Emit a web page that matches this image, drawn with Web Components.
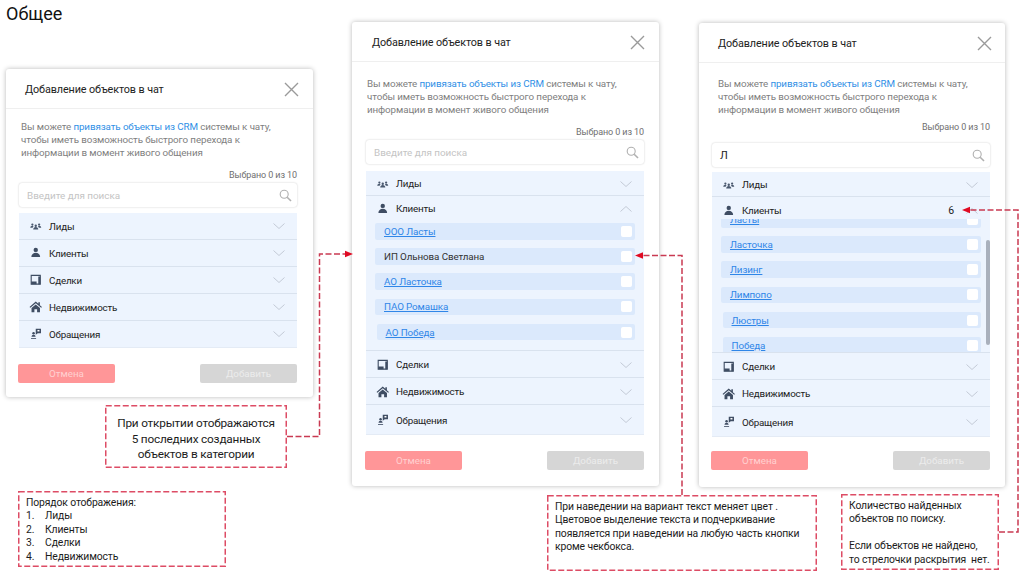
<!DOCTYPE html>
<html lang="ru">
<head>
<meta charset="utf-8">
<title>Добавление объектов в чат</title>
<style>
  html, body { margin: 0; background: #fff; }
  slide-canvas { width: 1024px; height: 574px; }
  #d1 { left: 6px; top: 69px; width: 307px; height: 328px; --row-pt: 0px; --intro-top: 11px; --count-top: 10px; --search-top: 1px; --acc-top: 6px; --btn-top: 16px; --body-left: 13px; --body-right: 16px; --intro-off: 2px; --head-left: 19px; --head-right: 14px; }
  #d2 { left: 352px; top: 22px; width: 307px; height: 464px; --intro-top: 15px; --count-top: 10px; --search-top: 1px; --acc-top: 7px; --btn-top: 16px; --body-left: 14px; --body-right: 15px; --intro-off: 1px; --head-left: 20px; --head-right: 14px; }
  #d3 { left: 699px; top: 23px; width: 306px; height: 464px; --intro-top: 14px; --count-top: 5px; --search-top: 9px; --acc-top: 5px; --btn-top: 14px; --body-left: 13px; --body-right: 15px; --intro-off: 6px; --head-left: 19px; --head-right: 13px; }
  #c1 { left: 105px; top: 405px; width: 182px; height: 63px; --fs: 11.800px; --ls: -.2px; --lh: 15.500px; --pad: 11px 4px; text-align: center; }
  #c2 { left: 18px; top: 491px; width: 208px; height: 76px; --pad: 5px 8px; }
  #c3 { left: 547px; top: 495px; width: 270px; height: 76px; --pad: 5px 8px; }
  #c4 { left: 841px; top: 494px; width: 158px; height: 76px; --pad: 5px 8px; }
  .num { display: inline-block; width: 19px; }
</style>
</head>
<body>
<slide-canvas heading="Общее">
  <attach-dialog id="d1">
    <acc-row icon="leads">Лиды</acc-row>
    <acc-row icon="client">Клиенты</acc-row>
    <acc-row icon="deal">Сделки</acc-row>
    <acc-row icon="house">Недвижимость</acc-row>
    <acc-row icon="request" last>Обращения</acc-row>
  </attach-dialog>

  <attach-dialog id="d2">
    <acc-row icon="leads" style="--row-h:25px">Лиды</acc-row>
    <acc-row icon="client" open style="--row-h:24px">Клиенты</acc-row>
    <item-list style="--list-h:131px;--list-top:3px">
      <list-item link>ООО Ласты</list-item>
      <list-item>ИП Ольнова Светлана</list-item>
      <list-item link>АО Ласточка</list-item>
      <list-item link>ПАО Ромашка</list-item>
      <list-item link style="--item-left:1.500px">АО Победа</list-item>
    </item-list>
    <acc-row icon="deal">Сделки</acc-row>
    <acc-row icon="house">Недвижимость</acc-row>
    <acc-row icon="request" last style="--row-h:30px">Обращения</acc-row>
  </attach-dialog>

  <attach-dialog id="d3" query="Л">
    <acc-row icon="leads" style="--row-h:25px">Лиды</acc-row>
    <acc-row icon="client" open count="6" style="--row-h:22px;--row-pt:5px">Клиенты</acc-row>
    <item-list scrollbar style="--list-h:134px;--list-top:-8px">
      <list-item link>Ласты</list-item>
      <list-item link>Ласточка</list-item>
      <list-item link>Лизинг</list-item>
      <list-item link>Лимпопо</list-item>
      <list-item link style="--item-left:1.500px">Люстры</list-item>
      <list-item link style="--item-left:1.500px">Победа</list-item>
    </item-list>
    <acc-row icon="deal">Сделки</acc-row>
    <acc-row icon="house">Недвижимость</acc-row>
    <acc-row icon="request" last style="--row-h:30px">Обращения</acc-row>
  </attach-dialog>

  <note-box id="c1">При открытии отображаются<br>5 последних созданных<br>объектов в категории</note-box>
  <note-box id="c2">Порядок отображения:<br><span class="num">1.</span>Лиды<br><span class="num">2.</span>Клиенты<br><span class="num">3.</span>Сделки<br><span class="num">4.</span>Недвижимость</note-box>
  <note-box id="c3">При наведении на вариант текст меняет цвет .<br>Цветовое выделение текста и подчеркивание<br>появляется при наведении на любую часть кнопки<br>кроме чекбокса.</note-box>
  <note-box id="c4">Количество найденных<br>объектов по поиску.<br><br>Если объектов не найдено,<br>то стрелочки раскрытия&nbsp; нет.</note-box>

  <note-arrows></note-arrows>
</slide-canvas>

<script>
const FONT = 'Roboto, "Open Sans", sans-serif';

const ICONS = {
  leads: `<g fill="#4a586e"><circle cx="4" cy="6.600" r="1.300"/><circle cx="12" cy="6.600" r="1.300"/><circle cx="8" cy="8" r="1.400"/><path d="M1.500 10.400c0-1.400 1-2.300 2.500-2.300.6 0 1 .1 1.400.4-.6.5-1 1.100-1 1.900z"/><path d="M14.500 10.400c0-1.400-1-2.300-2.500-2.300-.6 0-1 .1-1.400.4.6.5 1 1.100 1 1.900z"/><path d="M5 12.500c0-1.800 1.200-3 3-3s3 1.200 3 3z"/></g>`,
  client: `<g fill="#3f4d63"><circle cx="8" cy="4.600" r="2.600"/><path d="M2.800 13c0-3 2.200-5 5.200-5s5.200 2 5.200 5z"/></g>`,
  deal: `<path fill="none" stroke="#3f4d63" stroke-width="1.300" d="M2.600 2.800h10.800v10.400H2.600z"/><path d="M2.600 10.200h6.400v3H2.600zM11 4v9.200h2.400V4z" fill="#3f4d63"/>`,
  house: `<path fill="#3f4d63" d="M8 1.800 .6 8.400l1 .9L8 3.800l6.400 5.500 1-.9-2.500-2.200V2.600h-1.800v1.700zM3 9.600v4.800h3.400v-3.300h3.200v3.300H13V9.600L8 5.300z"/>`,
  request: `<g fill="#3f4d63"><path d="M8 2h6.200v5.400H10.400L8 9.200z"/><circle cx="5.400" cy="7.400" r="1.500"/><path d="M3 11.600c0-1.400 1-2.400 2.400-2.400s2.400 1 2.400 2.400z"/><path d="M2.400 13h6v1h-6z"/></g><path fill="#fff" d="M10 3.500h2.400v1.800H10z"/>`
};

class SlideCanvas extends HTMLElement {
  constructor() {
    super();
    this.attachShadow({ mode: 'open' });
    this.shadowRoot.innerHTML = `
      <style>
        :host { display: block; position: relative; overflow: hidden; background: #fff; }
        h1 { margin: 0; padding: 1px 0 0 6px; font: 400 18px/26px ${FONT}; color: #111; }
      </style>
      <h1></h1>
      <slot></slot>`;
  }
  connectedCallback() {
    this.shadowRoot.querySelector('h1').textContent = this.getAttribute('heading') || '';
  }
}

class AttachDialog extends HTMLElement {
  constructor() {
    super();
    this.attachShadow({ mode: 'open' });
    this.shadowRoot.innerHTML = `
      <style>
        :host {
          display: flex; flex-direction: column; position: absolute; box-sizing: border-box;
          background: #fff; border-radius: 3px;
          box-shadow: 0 0 5px rgba(0,0,0,.28);
          font-family: ${FONT}; color: #222;
        }
        header {
          flex: none; height: 40px; box-sizing: border-box;
          display: flex; align-items: center; justify-content: space-between;
          padding: 2px var(--head-right) 0 var(--head-left); border-bottom: 1px solid #efefef;
          font-size: 10.800px; letter-spacing: -.1px;
        }
        header svg { width: 15px; height: 15px; stroke: #9a9a9a; stroke-width: 1.400; fill: none; }
        .body { padding: 0 var(--body-right) 0 var(--body-left); display: flex; flex-direction: column; flex: 1; }
        .intro {
          margin: var(--intro-top) 0 0 var(--intro-off);
          font-size: 9.800px; letter-spacing: -.1px; line-height: 13px; color: #808080; white-space: nowrap;
        }
        .intro a { color: #2f8fe6; text-decoration: none; }
        .picked { margin-top: var(--count-top); text-align: right; font-size: 9px; letter-spacing: -.1px; line-height: 13px; color: #707070; }
        .search {
          margin-top: var(--search-top); height: 24px; box-sizing: border-box;
          display: flex; align-items: center; justify-content: space-between;
          padding: 0 5px 0 8px; border-radius: 3px; background: #fff;
          box-shadow: 0 0 2px rgba(0,0,0,.22);
          font-size: 9.900px; color: #c4c4c4;
        }
        .search.filled { color: #222; font-size: 11px; }
        .search svg { width: 13px; height: 13px; fill: none; stroke: #b0b0b0; stroke-width: 1.100; }
        .accordion { margin-top: var(--acc-top); display: flex; flex-direction: column; }
        .buttons { margin-top: var(--btn-top); margin-left: -1px; display: flex; justify-content: space-between; }
        .btn {
          width: 97px; height: 18.500px; display: flex; align-items: center; justify-content: center;
          border-radius: 2px; font-size: 9.800px;
        }
        .cancel { background: #ff9698; color: #ffd0d0; }
        .add { background: #d6d6d6; color: #ececec; }
      </style>
      <header>
        <span>Добавление объектов в чат</span>
        <svg viewBox="0 0 15 15"><path d="M1 1l13 13M14 1 1 14"/></svg>
      </header>
      <div class="body">
        <div class="intro">Вы можете <a>привязать объекты из CRM</a> системы к чату,<br>чтобы иметь возможность быстрого перехода к<br>информации в момент живого общения</div>
        <div class="picked">Выбрано 0 из 10</div>
        <div class="search">
          <span id="query"></span>
          <svg viewBox="0 0 13 13"><circle cx="5.200" cy="5.200" r="4"/><path d="M8.200 8.200l3.800 3.800" stroke-width="1.600"/></svg>
        </div>
        <div class="accordion"><slot></slot></div>
        <div class="buttons"><div class="btn cancel">Отмена</div><div class="btn add">Добавить</div></div>
      </div>`;
  }
  connectedCallback() {
    const query = this.getAttribute('query');
    this.shadowRoot.getElementById('query').textContent = query || 'Введите для поиска';
    if (query) this.shadowRoot.querySelector('.search').classList.add('filled');
  }
}

class AccRow extends HTMLElement {
  constructor() {
    super();
    this.attachShadow({ mode: 'open' });
    this.shadowRoot.innerHTML = `
      <style>
        :host {
          display: flex; align-items: center; box-sizing: border-box;
          height: var(--row-h, 27px); padding: var(--row-pt, 1px) 12px 0 10px;
          background: #edf4fe; border-bottom: 1px solid #d9e2ee;
          font-size: 9.800px; letter-spacing: -.2px; color: #222;
        }
        :host([open]) { border-bottom: 0; }
        :host([last]) { border-bottom-color: #e4ebf5; }
        #icon { width: 13.500px; height: 13.500px; flex: none; }
        .label { margin-left: 6.500px; flex: 1; }
        .count { margin-right: 12px; font-size: 10.500px; }
        #chev { width: 12px; height: 6px; fill: none; stroke: #c3cad6; stroke-width: 1; flex: none; }
      </style>
      <svg id="icon" viewBox="0 0 16 16"></svg>
      <span class="label"><slot></slot></span>
      <span class="count" id="count"></span>
      <svg id="chev" viewBox="0 0 12 6"><path id="chev-path" d="M.5.500 6 5.500 11.500.500"/></svg>`;
  }
  connectedCallback() {
    this.shadowRoot.getElementById('icon').innerHTML = ICONS[this.getAttribute('icon')] || '';
    this.shadowRoot.getElementById('count').textContent = this.getAttribute('count') || '';
    if (this.hasAttribute('open')) {
      this.shadowRoot.getElementById('chev-path').setAttribute('d', 'M.5 5.500 6 .5l5.500 5');
    }
  }
}

class ItemList extends HTMLElement {
  constructor() {
    super();
    this.attachShadow({ mode: 'open' });
    this.shadowRoot.innerHTML = `
      <style>
        :host {
          display: block; position: relative; overflow: hidden;
          height: var(--list-h); background: #edf4fe; border-bottom: 1px solid #d9e2ee; box-sizing: border-box;
        }
        .inner { margin-top: var(--list-top); padding: 0 9px; display: flex; flex-direction: column; gap: 8.700px; }
        .thumb { display: none; position: absolute; right: 0; top: 21px; width: 4px; height: 105px; border-radius: 2px; background: #a9b0bc; }
        :host([scrollbar]) .thumb { display: block; }
      </style>
      <div class="inner"><slot></slot></div>
      <div class="thumb"></div>`;
  }
}

class ListItem extends HTMLElement {
  constructor() {
    super();
    this.attachShadow({ mode: 'open' });
    this.shadowRoot.innerHTML = `
      <style>
        :host {
          display: flex; align-items: center; justify-content: space-between; box-sizing: border-box;
          height: 16.500px; margin-left: var(--item-left, 0); padding: 0 3.500px 0 9px;
          background: #dbe9fc; border-radius: 2px; font-size: 9.800px; letter-spacing: -.1px; color: #333;
        }
        :host([link]) { color: #2f86e8; text-decoration: underline; }
        .box { width: 11px; height: 11px; border-radius: 2px; background: #fff; flex: none; }
      </style>
      <span><slot></slot></span>
      <span class="box"></span>`;
  }
}

class NoteBox extends HTMLElement {
  constructor() {
    super();
    this.attachShadow({ mode: 'open' });
    this.shadowRoot.innerHTML = `
      <style>
        :host {
          display: block; position: absolute; box-sizing: border-box; padding: var(--pad);
          font: 400 var(--fs, 10.400px)/var(--lh, 13.400px) ${FONT}; letter-spacing: var(--ls, -.13px);
          color: #1c1c1c; white-space: nowrap;
        }
        svg { position: absolute; inset: 0; width: 100%; height: 100%; overflow: visible; }
        rect { x: .75px; y: .75px; width: calc(100% - 1.500px); height: calc(100% - 1.500px); fill: none; stroke: #dd4c65; stroke-width: 1.500; stroke-dasharray: 6 2.500; }
      </style>
      <svg><rect/></svg>
      <slot></slot>`;
  }
}

class NoteArrows extends HTMLElement {
  constructor() {
    super();
    this.attachShadow({ mode: 'open' });
    this.shadowRoot.innerHTML = `
      <style>
        :host { display: block; position: absolute; inset: 0; pointer-events: none; }
        svg { display: block; width: 100%; height: 100%; }
        path { fill: none; stroke: #c93a52; stroke-width: 1.500; stroke-dasharray: 6 2.500; }
        polygon { fill: #e00a22; }
      </style>
      <svg viewBox="0 0 1024 574">
        <path d="M287 436.500H319.500V254H347"/>
        <polygon points="353,254 345,250.800 345,257.200"/>
        <path d="M682 495V255.500H642"/>
        <polygon points="635,255.500 643,252.300 643,258.700"/>
        <path d="M999 532H1018V210H969"/>
        <polygon points="962,210 970,206.800 970,213.200"/>
      </svg>`;
  }
}

customElements.define('slide-canvas', SlideCanvas);
customElements.define('attach-dialog', AttachDialog);
customElements.define('acc-row', AccRow);
customElements.define('item-list', ItemList);
customElements.define('list-item', ListItem);
customElements.define('note-box', NoteBox);
customElements.define('note-arrows', NoteArrows);
</script>
</body>
</html>
